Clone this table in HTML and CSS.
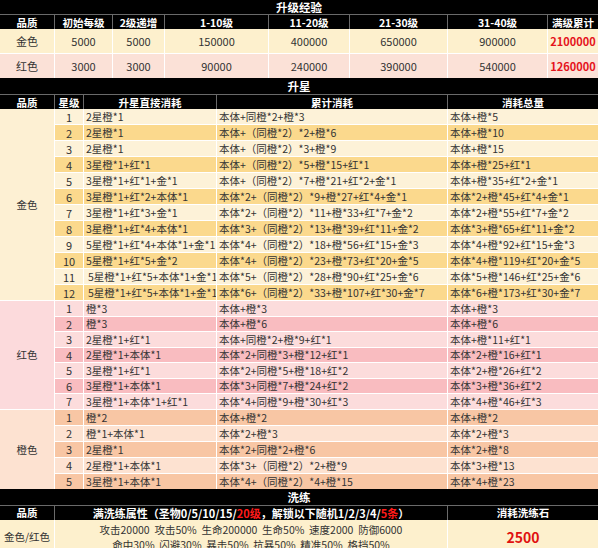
FILE: index.html
```html
<!DOCTYPE html>
<html lang="zh-CN">
<head>
<meta charset="utf-8">
<title>升级经验 / 升星 / 洗练</title>
<link rel="stylesheet" href="styles.css">
</head>
<body>
<div class="sheet">
  <div class="bar">升级经验</div>
  <div class="grid exp head">
    <div>品质</div><div>初始每级</div><div>2级递增</div><div>1-10级</div><div>11-20级</div><div>21-30级</div><div>31-40级</div><div>满级累计</div>
  </div>
  <div class="grid exp body">
    <div class="row gold-a"><div>金色</div><div>5000</div><div>5000</div><div>150000</div><div>400000</div><div>650000</div><div>900000</div><div class="hot">2100000</div></div>
    <div class="row red-a"><div>红色</div><div>3000</div><div>3000</div><div>90000</div><div>240000</div><div>390000</div><div>540000</div><div class="hot">1260000</div></div>
  </div>

  <div class="bar tall">升星</div>
  <div class="grid star head">
    <div>品质</div><div>星级</div><div>升星直接消耗</div><div>累计消耗</div><div>消耗总量</div>
  </div>
  <div class="grid star body">
    <div class="q q-gold">金色</div>
    <div class="row g1"><div class="n">1</div><div>2星橙*1</div><div>本体+同橙*2+橙*3</div><div>本体+橙*5</div></div>
    <div class="row g2"><div class="n">2</div><div>2星橙*1</div><div>本体+（同橙*2）*2+橙*6</div><div>本体+橙*10</div></div>
    <div class="row g1"><div class="n">3</div><div>2星橙*1</div><div>本体+（同橙*2）*3+橙*9</div><div>本体+橙*15</div></div>
    <div class="row g2"><div class="n">4</div><div>3星橙*1+红*1</div><div>本体+（同橙*2）*5+橙*15+红*1</div><div>本体+橙*25+红*1</div></div>
    <div class="row g1"><div class="n">5</div><div>3星橙*1+红*1+金*1</div><div>本体+（同橙*2）*7+橙*21+红*2+金*1</div><div>本体+橙*35+红*2+金*1</div></div>
    <div class="row g2"><div class="n">6</div><div>3星橙*1+红*2+本体*1</div><div>本体*2+（同橙*2）*9+橙*27+红*4+金*1</div><div>本体*2+橙*45+红*4+金*1</div></div>
    <div class="row g1"><div class="n">7</div><div>3星橙*1+红*3+金*1</div><div>本体*2+（同橙*2）*11+橙*33+红*7+金*2</div><div>本体*2+橙*55+红*7+金*2</div></div>
    <div class="row g2"><div class="n">8</div><div>3星橙*1+红*4+本体*1</div><div>本体*3+（同橙*2）*13+橙*39+红*11+金*2</div><div>本体*3+橙*65+红*11+金*2</div></div>
    <div class="row g1"><div class="n">9</div><div>5星橙*1+红*4+本体*1+金*1</div><div>本体*4+（同橙*2）*18+橙*56+红*15+金*3</div><div>本体*4+橙*92+红*15+金*3</div></div>
    <div class="row g2"><div class="n">10</div><div>5星橙*1+红*5+金*2</div><div>本体*4+（同橙*2）*23+橙*73+红*20+金*5</div><div>本体*4+橙*119+红*20+金*5</div></div>
    <div class="row g1"><div class="n">11</div><div class="ind">5星橙*1+红*5+本体*1+金*1</div><div>本体*5+（同橙*2）*28+橙*90+红*25+金*6</div><div>本体*5+橙*146+红*25+金*6</div></div>
    <div class="row g2"><div class="n">12</div><div class="ind">5星橙*1+红*5+本体*1+金*1</div><div>本体*6+（同橙*2）*33+橙*107+红*30+金*7</div><div>本体*6+橙*173+红*30+金*7</div></div>

    <div class="q q-red">红色</div>
    <div class="row r1"><div class="n">1</div><div>橙*3</div><div>本体+橙*3</div><div>本体+橙*3</div></div>
    <div class="row r2"><div class="n">2</div><div>橙*3</div><div>本体+橙*6</div><div>本体+橙*6</div></div>
    <div class="row r1"><div class="n">3</div><div>2星橙*1+红*1</div><div>本体+同橙*2+橙*9+红*1</div><div>本体+橙*11+红*1</div></div>
    <div class="row r2"><div class="n">4</div><div>2星橙*1+本体*1</div><div>本体*2+同橙*3+橙*12+红*1</div><div>本体*2+橙*16+红*1</div></div>
    <div class="row r1"><div class="n">5</div><div>3星橙*1+红*1</div><div>本体*2+同橙*5+橙*18+红*2</div><div>本体*2+橙*26+红*2</div></div>
    <div class="row r2"><div class="n">6</div><div>3星橙*1+本体*1</div><div>本体*3+同橙*7+橙*24+红*2</div><div>本体*3+橙*36+红*2</div></div>
    <div class="row r1"><div class="n">7</div><div>3星橙*1+本体*1+红*1</div><div>本体*4+同橙*9+橙*30+红*3</div><div>本体*4+橙*46+红*3</div></div>

    <div class="q q-org">橙色</div>
    <div class="row o2"><div class="n">1</div><div>橙*2</div><div>本体+橙*2</div><div>本体+橙*2</div></div>
    <div class="row o1"><div class="n">2</div><div>橙*1+本体*1</div><div>本体*2+橙*3</div><div>本体*2+橙*3</div></div>
    <div class="row o2"><div class="n">3</div><div>2星橙*1</div><div>本体*2+同橙*2+橙*6</div><div>本体*2+橙*8</div></div>
    <div class="row o1"><div class="n">4</div><div>2星橙*1+本体*1</div><div>本体*3+（同橙*2）*2+橙*9</div><div>本体*3+橙*13</div></div>
    <div class="row o2"><div class="n">5</div><div>3星橙*1+本体*1</div><div>本体*4+（同橙*2）*4+橙*15</div><div>本体*4+橙*23</div></div>
  </div>

  <div class="bar wash-bar">洗练</div>
  <div class="grid wash head">
    <div>品质</div>
    <div class="wide">满洗练属性（圣物0/5/10/15/<span class="red">20级</span>，解锁以下随机1/2/3/4/<span class="red">5条</span>）</div>
    <div>消耗洗练石</div>
  </div>
  <div class="grid wash body">
    <div class="wq">金色/红色</div>
    <div class="attrs">
      <div>攻击20000&nbsp; 攻击50%&nbsp; 生命200000&nbsp; 生命50%&nbsp; 速度2000&nbsp; 防御6000</div>
      <div>命中30%&nbsp; 闪避30%&nbsp; 暴击50%&nbsp; 抗暴50%&nbsp; 精准50%&nbsp; 格挡50%</div>
    </div>
    <div class="stone">2500</div>
  </div>
</div>
</body>
</html>
```

FILE: styles.css
```css
html, body {
  margin: 0;
  padding: 0;
  background: #000;
}

body {
  width: 598px;
  height: 548px;
  overflow: hidden;
  font-family: "Noto Sans CJK SC", "Noto Sans", sans-serif;
  color: #333;
}

.sheet {
  width: 598px;
}

.bar {
  background: #000;
  color: #fff;
  font-weight: bold;
  font-size: 11.5px;
  height: 14px;
  line-height: 15px;
  text-align: center;
  overflow: hidden;
}

.bar.tall {
  height: 16px;
  line-height: 17px;
}

.bar.wash-bar {
  height: 16px;
  line-height: 16px;
}

.grid {
  display: grid;
  gap: 1px;
}

.head {
  background: #6a6a6a;
  border-top: 1px solid #6a6a6a;
  grid-auto-rows: 14px;
}

.head > div {
  background: #000;
  color: #fff;
  font-weight: bold;
  font-size: 10.5px;
  display: flex;
  align-items: center;
  justify-content: center;
  white-space: nowrap;
  overflow: hidden;
}

.head > .wide {
  font-size: 11px;
}

.body {
  background: #fff;
}

.row {
  display: contents;
}

.row > div {
  display: flex;
  align-items: center;
  white-space: nowrap;
  overflow: hidden;
}

/* section 1: experience */
.exp {
  grid-template-columns: 54px 57px 51px 103px 80px 97px 99px 50px;
}

.exp.body {
  grid-auto-rows: 24px;
  font-size: 11px;
}

.exp.body .row > div {
  justify-content: center;
}

.gold-a > div {
  background: #fdf0cd;
}

.red-a > div {
  background: #fbe1d7;
}

.hot {
  color: #e5141c;
  font-weight: bold;
}

/* section 2: stars */
.star {
  grid-template-columns: 54px 28px 132px 230px 150px;
}

.star.body {
  grid-template-rows: repeat(12, 15px) repeat(7, 14.5px) repeat(5, 15px);
  font-size: 10.5px;
}

.star.body .row > div {
  padding-left: 2px;
}

.star.body .row > .n {
  justify-content: center;
  padding-left: 0;
  font-size: 11px;
}

.star.body .row > .ind {
  padding-left: 4px;
}

.q {
  display: flex;
  align-items: center;
  justify-content: center;
  font-size: 10.5px;
}

.q-gold {
  grid-row: span 12;
  background: #fdf0d3;
}

.q-red {
  grid-row: span 7;
  background: #fcdadc;
}

.q-org {
  grid-row: span 5;
  background: #fde2d1;
}

.g1 > div {
  background: #fdf2d8;
}

.g2 > div {
  background: #fbd98d;
}

.r1 > div {
  background: #fcdcdc;
}

.r2 > div {
  background: #f9bcc0;
}

.o1 > div {
  background: #fde2d1;
}

.o2 > div {
  background: #f8c6a4;
}

/* section 3: wash */
.wash {
  grid-template-columns: 54px 392px 150px;
}

.red {
  color: #ff1a1a;
}

.wash.body {
  background: #fff;
  grid-auto-rows: 34px;
}

.wash.body > div {
  background: #fdf0cd;
  display: flex;
  align-items: center;
  justify-content: center;
}

.wq {
  font-size: 10.5px;
}

.attrs {
  flex-direction: column;
  font-size: 10.5px;
  line-height: 15px;
  white-space: nowrap;
}

.stone {
  color: #e01010;
  font-weight: bold;
  font-size: 14px;
}
```
